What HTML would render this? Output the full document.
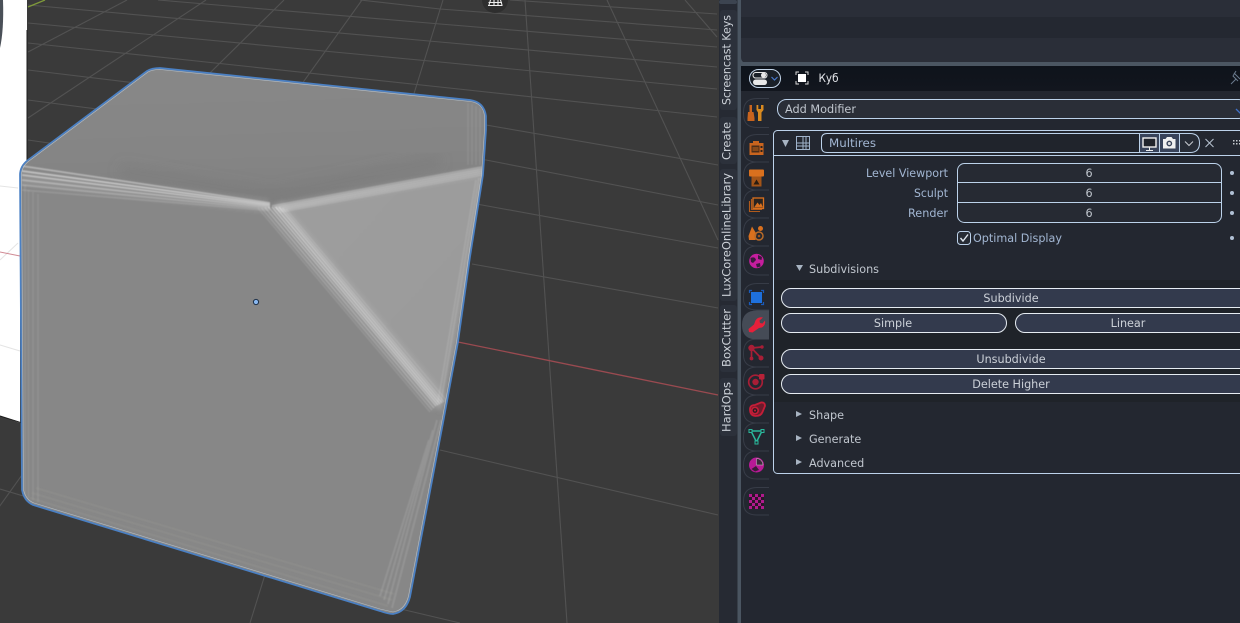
<!DOCTYPE html>
<html><head><meta charset="utf-8"><style>
html,body{margin:0;padding:0;background:#232730;width:1240px;height:623px;overflow:hidden}
svg{display:block;position:absolute;left:0;top:0}
text{font-family:"DejaVu Sans","Liberation Sans","Noto Sans CJK SC",sans-serif;font-size:11.2px}
</style></head><body>
<svg width="1240" height="623" viewBox="0 0 1240 623" xmlns="http://www.w3.org/2000/svg">
<defs>
<linearGradient id="top" x1="0.45" y1="0" x2="0.55" y2="1"><stop offset="0" stop-color="#888888"/><stop offset=".65" stop-color="#858585"/><stop offset="1" stop-color="#808080"/></linearGradient>
<linearGradient id="right" x1="0" y1="0" x2="1" y2="1"><stop offset="0" stop-color="#9e9e9e"/><stop offset="1" stop-color="#9a9a9a"/></linearGradient>
<linearGradient id="hdr" x1="0" y1="0" x2="0" y2="1"><stop offset="0" stop-color="#0e131b"/><stop offset="1" stop-color="#12161e"/></linearGradient>
<filter id="b1" x="-10%" y="-10%" width="120%" height="120%"><feGaussianBlur stdDeviation=".6"/></filter>
<filter id="b2" x="-10%" y="-10%" width="120%" height="120%"><feGaussianBlur stdDeviation="2.2"/></filter>
<filter id="b3" x="-20%" y="-20%" width="140%" height="140%"><feGaussianBlur stdDeviation="6"/></filter>
<clipPath id="cube"><path d="M28 160L147 71Q152 68 160 68L470 100Q484 102 486 116L486 130L483 175L470 257L458 342L443 423L410 597Q406 612 393 614Q388 614 380 611L33 505Q24 501 22 490L20 175Q20 166 28 160Z"/></clipPath>
<clipPath id="vp"><rect x="0" y="0" width="719" height="623"/></clipPath>
</defs>

<!-- viewport -->
<rect width="720" height="623" fill="#3a3a3a"/>
<g clip-path="url(#vp)" stroke="#525252" stroke-width="1.1" fill="none">
<path d="M28 5L440 42L717 67"/>
<path d="M158 0L440 24L717 47"/>
<path d="M360 0L440 9L717 30"/>
<path d="M510 0L717 14"/>
<path d="M28 23L440 62L717 89"/>
<path d="M28 43L440 87L717 117"/>
<path d="M28 70L486 125L718 165"/>
<path d="M28 100L486 160L718 205"/>
<path d="M28 140L482 205L718 248"/>
<path d="M472 264L718 308"/>
<path d="M440 450L718 515"/>
<path d="M0 489L405 610L460 623"/>
<path d="M685 0L717 37"/>
<path d="M607 0L718 240"/>
<path d="M525 0L567 623"/>
<path d="M443 0L250 623"/>
<path d="M362 0L-84 623"/>
<path d="M284 0L20 260"/>
<path d="M206 0L28 118"/>
<path d="M127 0L28 52"/>
</g>
<path d="M45 0L28 7" stroke="#7f9a3a" stroke-width="1.3"/>
<path d="M458 342L718 395" stroke="#9a4a50" stroke-width="1.3"/>
<!-- white block -->
<path d="M0 0H27V165L20 175V423L0 416Z" fill="#fff"/>
<path d="M27 30V162" stroke="#1c1c1c" stroke-width="1"/>
<path d="M0 416L22 423" stroke="#1c1c1c" stroke-width="1"/>
<path d="M0 0H3Q4 30 0 48Z" fill="#4a5058"/>
<path d="M0 186L18 188M0 345L20 351M18 243L0 260" stroke="#e4e4e4" stroke-width="1"/>
<path d="M0 252L20 256" stroke="#d08a94" stroke-width="1"/>

<!-- cube -->
<g clip-path="url(#cube)">
<rect x="0" y="50" width="500" height="580" fill="#878787"/>
<g filter="url(#b2)">
<path d="M10 166L150 60L500 95L490 168L272 205Z" fill="url(#top)"/>
<path d="M276 209L490 172L441 412Z" fill="url(#right)"/>
</g>
<g filter="url(#b3)"><path d="M120 170L272 196L440 160" stroke="#747474" stroke-width="12" fill="none" opacity=".32"/></g>
<g filter="url(#b2)" fill="none" stroke="#fff">
<path d="M20 178L268 206" stroke-width="15" opacity=".09"/>
<path d="M274 208L482 172" stroke-width="10" opacity=".1"/>
<path d="M274 207L441 405" stroke-width="22" opacity=".08"/>
</g>
<g filter="url(#b1)" fill="none" stroke="#fff">
<!-- band 1 -->
<path d="M22 166L270 203" stroke-width="1.7" opacity=".38"/>
<path d="M22 171L270 204.500" stroke-width="1.7" opacity=".46"/>
<path d="M22 175L270 206" stroke-width="1.7" opacity=".4"/>
<path d="M22 180L270 207.500" stroke-width="1.7" opacity=".3"/>
<path d="M22 185L270 209" stroke-width="1.7" opacity=".2"/>
<path d="M22 190L270 210.500" stroke-width="1.7" opacity=".12"/>
<!-- band 2 -->
<path d="M272 206L482 167" stroke-width="1.7" opacity=".24"/>
<path d="M274 207.500L482 169" stroke-width="1.7" opacity=".3"/>
<path d="M276 209L482 171" stroke-width="1.7" opacity=".28"/>
<path d="M278 210.500L482 173" stroke-width="1.7" opacity=".22"/>
<path d="M280 212L482 175" stroke-width="1.7" opacity=".14"/>
<!-- band 3 -->
<path d="M258 208L430 412" stroke-width="1.6" opacity=".1"/>
<path d="M261.500 208L432 410" stroke-width="1.6" opacity=".17"/>
<path d="M265 207.500L434 408" stroke-width="1.6" opacity=".24"/>
<path d="M268.500 207L436 406" stroke-width="1.6" opacity=".32"/>
<path d="M272 207L438 405" stroke-width="1.6" opacity=".38"/>
<path d="M275.500 207L440 404" stroke-width="1.6" opacity=".38"/>
<path d="M279 207L442 403" stroke-width="1.6" opacity=".32"/>
<path d="M282.500 208L444 402" stroke-width="1.6" opacity=".22"/>
<path d="M286 209L446 400" stroke-width="1.6" opacity=".12"/>
<!-- rim left -->
<path d="M25 185V495M28.500 190V498M33 192V500M38 194V502" stroke-width="2" opacity=".07"/>
<!-- rim bottom -->
<path d="M30 498L388 606M32 493L392 600M36 488L394 594" stroke="#b8b4a8" stroke-width="2" opacity=".12"/>
<!-- rim right -->
<path d="M441 420L392 608M437 420L388 604M433 430L384 600M429 440L380 596" stroke-width="2" opacity=".11"/>
<!-- top right corner -->
<path d="M480 108V165M476 106V165M472 104V165M468 103V165" stroke-width="1.8" opacity=".07"/>
<!-- right edge -->
<path d="M479 178L441 402M476 180L438 402" stroke-width="2" opacity=".1"/>
</g>
</g>
<path d="M28 160L147 71Q152 68 160 68L470 100Q484 102 486 116L486 130L483 175L470 257L458 342L443 423L410 597Q406 612 393 614Q388 614 380 611L33 505Q24 501 22 490L20 175Q20 166 28 160Z" fill="none" stroke="#4a80c4" stroke-width="1.7"/>
<path d="M29 161L148 72Q153 69.500 160 69.500L470 101.500Q483 103 484.500 116L484.500 130L481.500 175L468.500 257L456.500 342L441.500 423L408.500 596Q405 610 393 612L380 609L34 503Q26 500 23.500 490L21.500 175Q21.500 167 29 161Z" fill="none" stroke="#c4d4e4" stroke-width=".6" opacity=".7"/>
<circle cx="256" cy="302" r="2.600" fill="#8ab8f0" stroke="#1e3048" stroke-width="1"/>

<!-- top gizmo -->
<circle cx="495" cy="0" r="13" fill="#2e2e2e"/>
<path d="M489 5L490.500 0M494 5V0M498 5V0M502 5L500.500 0M488.500 2.500H502M488 5.500H502.500" stroke="#eee" stroke-width="1.1" fill="none"/>

<!-- tabs strip -->
<rect x="719" y="0" width="22" height="623" fill="#262a33"/>
<rect x="737.500" y="0" width="3.500" height="623" fill="#4a5561"/>
<rect x="719" y="0" width="18" height="4" rx="2" fill="#3c4450"/>
<rect x="720" y="10" width="17" height="100" rx="3" fill="#2c313b"/>
<rect x="720" y="117" width="17" height="47" rx="3" fill="#2c313b"/>
<rect x="720" y="169" width="17" height="132" rx="3" fill="#2c313b"/>
<rect x="720" y="305" width="17" height="67" rx="3" fill="#2c313b"/>
<rect x="720" y="378" width="17" height="58" rx="3" fill="#2c313b"/>
<g fill="#ccd1d8">
<text transform="translate(730.500,60) rotate(-90)" text-anchor="middle" textLength="90" lengthAdjust="spacingAndGlyphs">Screencast Keys</text>
<text transform="translate(730.500,141) rotate(-90)" text-anchor="middle" textLength="38" lengthAdjust="spacingAndGlyphs">Create</text>
<text transform="translate(730.500,235) rotate(-90)" text-anchor="middle" textLength="124" lengthAdjust="spacingAndGlyphs">LuxCoreOnlineLibrary</text>
<text transform="translate(730.500,338) rotate(-90)" text-anchor="middle" textLength="58" lengthAdjust="spacingAndGlyphs">BoxCutter</text>
<text transform="translate(730.500,407) rotate(-90)" text-anchor="middle" textLength="50" lengthAdjust="spacingAndGlyphs">HardOps</text>
</g>

<!-- top panel -->
<rect x="741" y="0" width="499" height="62" fill="#2a2e38"/>
<rect x="741" y="17" width="499" height="21" fill="#242831"/>
<rect x="741" y="62" width="499" height="4" fill="#4b5662"/>
<path d="M741 57Q741 63 747 63H741Z" fill="#4b5662"/>
<!-- body -->
<rect x="741" y="66" width="499" height="557" fill="#232730"/>
<rect x="741" y="66" width="499" height="25" fill="url(#hdr)"/>

<!-- header -->
<rect x="749.500" y="69.500" width="31" height="18" rx="9" fill="#1a2028" stroke="#c4d6ea"/>
<rect x="753" y="72.500" width="14" height="5.500" rx="2.700" fill="none" stroke="#e8e8e8" stroke-width="1"/>
<rect x="753" y="79.500" width="14" height="5.500" rx="2.700" fill="#e8e8e8"/>
<circle cx="763.500" cy="75.200" r="2.500" fill="#e8e8e8"/>
<path d="M771.500 77L774.500 80L777.500 77" fill="none" stroke="#4a78c8" stroke-width="1.200"/>
<path d="M796 75V72H799M805 72H808V75M796 81V84H799M805 84H808V81" fill="none" stroke="#d8d8d8" stroke-width="1"/>
<rect x="798" y="74" width="8" height="8" fill="#fff"/>
<text x="818.500" y="82" fill="#e4e6ea" textLength="20" lengthAdjust="spacingAndGlyphs">Куб</text>
<path d="M1231 84L1236 79M1234 73L1240 79M1236 71L1233 76L1238 81" fill="none" stroke="#6a7a8c" stroke-width="1"/>

<!-- sidebar tabs -->
<g fill="none" stroke="#373c47" stroke-width="1">
<path d="M769 98.500H757Q743.500 98.500 743.500 112V114Q743.500 127.500 757 127.500H769"/>
<path d="M769 134.500H757Q743.500 134.500 743.500 148V150Q743.500 162 757 162H769"/>
<path d="M757 162Q743.500 162 743.500 176V178Q743.500 190 757 190H769M769 162H757"/>
<path d="M757 190Q743.500 190 743.500 204V206Q743.500 218 757 218H769M769 190H757"/>
<path d="M757 218Q743.500 218 743.500 232V234Q743.500 246 757 246H769M769 218H757"/>
<path d="M757 246Q743.500 246 743.500 260V262Q743.500 275 757 275H769M769 246H757"/>
<path d="M769 283.500H757Q743.500 283.500 743.500 297V299Q743.500 310 757 310H769"/>
<path d="M757 339Q743.500 339 743.500 353V355Q743.500 367 757 367H769M769 339H757"/>
<path d="M757 367Q743.500 367 743.500 381V383Q743.500 395 757 395H769M769 367H757"/>
<path d="M757 395Q743.500 395 743.500 409V411Q743.500 423 757 423H769M769 395H757"/>
<path d="M757 423Q743.500 423 743.500 437V439Q743.500 451 757 451H769M769 423H757"/>
<path d="M757 451Q743.500 451 743.500 465V467Q743.500 479 757 479H769M769 451H757"/>
<path d="M769 487.500H757Q743.500 487.500 743.500 501V503Q743.500 515 757 515H769"/>
</g>
<path d="M769 310.500H757Q742 310.500 742 325Q742 339.500 757 339.500H769Z" fill="#454b56"/>

<!-- tool -->
<g fill="#c9641e"><rect x="749.500" y="105" width="2.500" height="7"/><path d="M748 112H753.500L754.500 118V121H747.500V118Z"/><path d="M756.500 105H758.300V109H761V105H763.500V110L761.500 112.500V121H758V112.500L756.500 110Z" fill="#d98a20"/></g>
<!-- render camera -->
<path d="M753 143V141H759V143H763.500V155H749.500V143Z" fill="#c9641e"/><rect x="751.500" y="145.500" width="8" height="7" fill="#4c2d18"/><rect x="752.500" y="147" width="6" height="4" fill="#8a4a1a"/><rect x="760.500" y="146" width="2" height="2" fill="#2a221e"/><rect x="760.500" y="150" width="2" height="2" fill="#2a221e"/>
<!-- output -->
<rect x="749" y="169.500" width="15" height="7" rx="1" fill="#d9701e"/><path d="M751.500 176.500H761.500V186.500H751.500Z" fill="#a35418"/><path d="M753.500 184.500L756.500 179.500L759.500 184.500Z" fill="#2a1c10"/>
<!-- view layer -->
<g fill="none" stroke="#b05a1c" stroke-width="1.1"><path d="M749.500 201V211.500H760"/><path d="M751.500 199V209.500H762"/></g><rect x="753" y="198" width="10.500" height="10.500" fill="#2a2420" stroke="#d9701e" stroke-width="1.300"/><path d="M754 207.500L757.500 202.500L759.500 205L761 203L763 207.500Z" fill="#d9701e"/>
<!-- scene -->
<path d="M752 226.500L756.500 234L755.500 240H749L748.500 236Z" fill="#d9701e"/><circle cx="760.500" cy="228.500" r="2.500" fill="#d9701e"/><circle cx="759" cy="236" r="4" fill="none" stroke="#b86a28" stroke-width="1.500"/><circle cx="759" cy="236" r="1.300" fill="#a35418"/>
<!-- world -->
<circle cx="756.500" cy="261" r="7.300" fill="#c61e9e"/><path d="M750.500 258Q755 256 756 260L753 263L751 262ZM758 255L762 257L761.500 260L758 259ZM756 264L760 263L760.500 266.500L757 267.500Z" fill="#3a1a3c"/>
<!-- object -->
<path d="M749.500 293V290.500H752M761 290.500H763.500V293M749.500 302V304.500H752M761 304.500H763.500V302" fill="none" stroke="#1a5ab8" stroke-width="1.200"/>
<rect x="751" y="292" width="11" height="11" fill="#1e70dc"/>
<!-- modifier wrench -->
<path d="M763 317.500L759.500 320.500L760 323L762.500 323.500L765 320.500Q766 325 762 327.500L759 328L752.500 332.500L749 332L748.500 329L754 324.500L755.500 320.500Q758 316.500 763 317.500Z" fill="#e6203a"/>
<!-- particles -->
<g stroke="#a81e36" stroke-width="1.700" fill="none"><path d="M751.500 348L762 347M751.500 348L761 358M751.500 348L751.500 358"/></g><circle cx="751.500" cy="348" r="3.200" fill="#a81e36"/><circle cx="762" cy="347" r="1.700" fill="#a81e36"/><circle cx="761" cy="358" r="2.500" fill="#a81e36"/><circle cx="751.500" cy="358.500" r="1.900" fill="#a81e36"/>
<!-- physics -->
<circle cx="755.500" cy="382" r="6.800" fill="none" stroke="#a81e36" stroke-width="1.700"/><circle cx="755.500" cy="382" r="3.200" fill="#a81e36"/><rect x="759" y="374" width="5.500" height="5.500" rx="1" fill="#b82238"/>
<!-- constraints -->
<path d="M750 409.500Q750 405 755 405L761 402.500Q765 402 765 406L762.500 412Q761 416 755.500 416Q750 415.500 750 409.500Z" fill="#6e1a2c" stroke="#c41e38" stroke-width="1.800"/><circle cx="755" cy="410.500" r="3.200" fill="#2a1c22" stroke="#c41e38" stroke-width="1.600"/><circle cx="755" cy="410.500" r="1" fill="#c41e38"/>
<!-- data -->
<path d="M751 431H762L756.500 442Z" fill="none" stroke="#2ab89c" stroke-width="1.500"/><g fill="#232730" stroke="#2ab89c" stroke-width="1"><rect x="749" y="429.500" width="3" height="3"/><rect x="761" y="429.500" width="3" height="3"/><rect x="755" y="441" width="3" height="3"/></g>
<!-- material -->
<circle cx="756.500" cy="465" r="7.500" fill="#b81a96"/><path d="M756.500 458.500A6.500 6.500 0 0 1 763 465L756.500 465Z" fill="#3a2a3a" stroke="#c8c8c8" stroke-width=".5"/><path d="M751.500 469L756 466L759 470L755 471.500Z" fill="#3a1a38"/>
<!-- texture -->
<rect x="749" y="494" width="15" height="15" fill="#b01a8c"/>
<g fill="#2a1628"><rect x="752" y="494" width="3" height="3"/><rect x="758" y="494" width="3" height="3"/><rect x="749" y="497" width="3" height="3"/><rect x="755" y="497" width="3" height="3"/><rect x="761" y="497" width="3" height="3"/><rect x="752" y="500" width="3" height="3"/><rect x="758" y="500" width="3" height="3"/><rect x="749" y="503" width="3" height="3"/><rect x="755" y="503" width="3" height="3"/><rect x="761" y="503" width="3" height="3"/><rect x="752" y="506" width="3" height="3"/><rect x="758" y="506" width="3" height="3"/></g>

<!-- add modifier -->
<rect x="777.500" y="99.500" width="470" height="19" rx="9" fill="#2a2e37" stroke="#bcd2ea"/>
<text x="785" y="113" fill="#c0c6ce" textLength="71" lengthAdjust="spacingAndGlyphs">Add Modifier</text>
<path d="M1236 109L1240 113L1244 109" fill="none" stroke="#3f70c8" stroke-width="1.300"/>

<!-- modifier panel -->
<rect x="773.500" y="130.500" width="480" height="343" rx="4" fill="#232730" stroke="#bcd2ea"/>
<path d="M774 155.500H1240" stroke="#bcd2ea"/>
<path d="M782 140L789 140L785.500 147Z" fill="#a8b4c2"/>
<g fill="none" stroke="#a0b4cc" stroke-width="1"><rect x="796.500" y="136.500" width="13" height="13"/><path d="M796.500 143H809.500M796.500 146H809.500M803 136.500V149.500M806 136.500V149.500"/></g>
<path d="M1139 133.500H827Q821.500 133.500 821.500 139V147Q821.500 152.500 827 152.500H1139" fill="#20242c" stroke="#bcd2ea"/>
<text x="829" y="147" fill="#a2b6d2" textLength="47" lengthAdjust="spacingAndGlyphs">Multires</text>
<rect x="1139.500" y="133.500" width="20" height="19" fill="#38435a" stroke="#bcd2ea"/>
<rect x="1159.500" y="133.500" width="20" height="19" fill="#38435a" stroke="#bcd2ea"/>
<path d="M1179.500 133.500H1190Q1199.500 133.500 1199.500 143Q1199.500 152.500 1190 152.500H1179.500Z" fill="#272c36" stroke="#bcd2ea"/>
<rect x="1143" y="138" width="13" height="9" fill="#20242c" stroke="#f0f0f0" stroke-width="1.400"/><path d="M1149.500 147V150M1146 150.500H1153" stroke="#f0f0f0" stroke-width="1"/>
<path d="M1163 139H1165.500L1167 137H1171.500L1173 139H1175.500V148.500H1163Z" fill="#f0f0f0"/><circle cx="1169.300" cy="143.500" r="3.200" fill="#38435a" stroke="#f0f0f0" stroke-width=".6"/><circle cx="1169.300" cy="143.500" r="1.500" fill="#e0e0e0"/>
<path d="M1185 141.500L1189 145.500L1193 141.500" fill="none" stroke="#c8ccd2" stroke-width="1"/>
<path d="M1205.500 139L1213.500 147M1213.500 139L1205.500 147" stroke="#b8c4d2" stroke-width="1"/>
<g fill="#c8ccd2"><rect x="1233" y="140" width="1.500" height="1.500"/><rect x="1236" y="140" width="1.500" height="1.500"/><rect x="1239" y="140" width="1.500" height="1.500"/><rect x="1233" y="143" width="1.500" height="1.500"/><rect x="1236" y="143" width="1.500" height="1.500"/><rect x="1239" y="143" width="1.500" height="1.500"/></g>

<!-- values -->
<g fill="#a2b6d2">
<text x="866" y="177" textLength="82" lengthAdjust="spacingAndGlyphs">Level Viewport</text>
<text x="914" y="197" textLength="34" lengthAdjust="spacingAndGlyphs">Sculpt</text>
<text x="908" y="217" textLength="40" lengthAdjust="spacingAndGlyphs">Render</text>
</g>
<rect x="957.500" y="163.500" width="264" height="59" rx="7" fill="#262a33" stroke="#bcd2ea"/>
<path d="M958 182.500H1221M958 202.500H1221" stroke="#bcd2ea"/>
<g fill="#c0c6ce" text-anchor="middle">
<text x="1089" y="177">6</text><text x="1089" y="197">6</text><text x="1089" y="217">6</text>
</g>
<g fill="#b0c0d4"><circle cx="1232" cy="173" r="2"/><circle cx="1232" cy="193" r="2"/><circle cx="1232" cy="213" r="2"/><circle cx="1232" cy="238" r="2"/></g>
<rect x="957.500" y="231.500" width="13" height="13" rx="3" fill="#272c35" stroke="#bcd2ea"/>
<path d="M960.500 238L963 241L968 234.500" fill="none" stroke="#dfe6ee" stroke-width="1.400"/>
<text x="973" y="242" fill="#a2b6d2" textLength="89" lengthAdjust="spacingAndGlyphs">Optimal Display</text>

<!-- subdivisions -->
<path d="M796 265L803 265L799.500 271Z" fill="#a8b4c2"/>
<text x="809" y="273" fill="#c0c6ce" textLength="70" lengthAdjust="spacingAndGlyphs">Subdivisions</text>
<rect x="774" y="280" width="470" height="122" fill="#1f2329"/>
<g fill="#333a4d" stroke="#e6ecf2" stroke-width="1">
<rect x="781.500" y="288.500" width="470" height="19" rx="9.500"/>
<rect x="781.500" y="313.500" width="225" height="19" rx="9.500"/>
<rect x="1015.500" y="313.500" width="236" height="19" rx="9.500"/>
<rect x="781.500" y="349.500" width="470" height="19" rx="9.500"/>
<rect x="781.500" y="374.500" width="470" height="19" rx="9.500"/>
</g>
<g fill="#ccd1d8" text-anchor="middle">
<text x="1011" y="302">Subdivide</text>
<text x="893" y="327">Simple</text>
<text x="1128" y="327">Linear</text>
<text x="1011" y="363">Unsubdivide</text>
<text x="1011" y="388">Delete Higher</text>
</g>
<g fill="#a8b4c2"><path d="M796 411V417L802 414Z"/><path d="M796 435V441L802 438Z"/><path d="M796 459V465L802 462Z"/></g>
<g fill="#c0c6ce"><text x="809" y="419">Shape</text><text x="809" y="443">Generate</text><text x="809" y="467">Advanced</text></g>
</svg>
</body></html>
